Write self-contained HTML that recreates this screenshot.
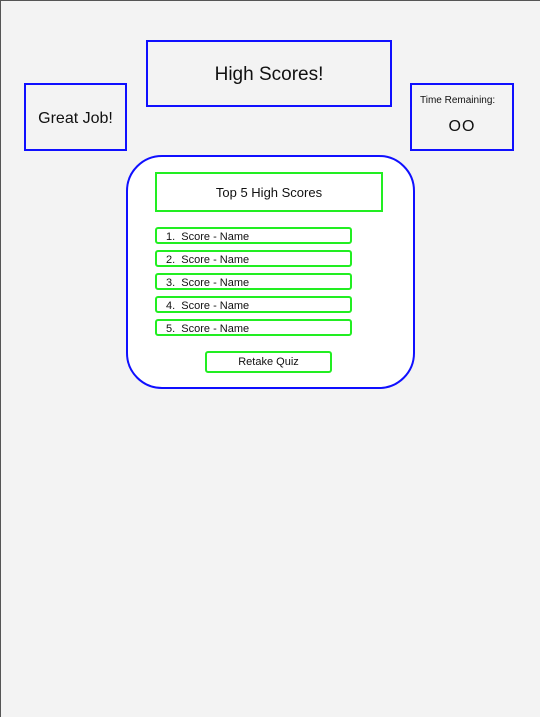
<!DOCTYPE html>
<html><head><style>
body{margin:0;width:540px;height:716px;background:#f3f3f3;font-family:"Liberation Sans",sans-serif;color:#111;position:relative;overflow:hidden}
.frame{position:absolute;left:0;top:0;width:540px;height:716px;border-left:1px solid #555;border-top:1px solid #555}
.b{position:absolute;box-sizing:border-box;border:2px solid #0f0fff;display:flex;align-items:center;justify-content:center}
.g{position:absolute;box-sizing:border-box;border:2px solid #22ee22;display:flex;align-items:center}
.g.l{padding-top:2px}
</style></head><body>
<div class="frame"></div>
<div class="b" style="left:146px;top:40px;width:246px;height:67px;font-size:19px;padding-top:2px">High Scores!</div>
<div class="b" style="left:24px;top:83px;width:103px;height:68px;font-size:16px;padding-top:3px">Great Job!</div>
<div class="b" style="left:410px;top:83px;width:104px;height:68px;display:block">
<div style="font-size:10px;margin:10px 0 0 8px">Time Remaining:</div>
<div style="font-size:16px;text-align:center;margin-top:12px;letter-spacing:1px">OO</div></div>
<div class="b" style="left:126px;top:155px;width:289px;height:234px;border-radius:36px;background:#fff"></div>
<div class="g" style="left:155px;top:172px;width:228px;height:40px;justify-content:center;font-size:13px">Top 5 High Scores</div>
<div class="g l" style="left:155px;top:227px;width:197px;height:17px;border-radius:3px;font-size:11px;padding-left:9px">1.&nbsp; Score - Name</div>
<div class="g l" style="left:155px;top:250px;width:197px;height:17px;border-radius:3px;font-size:11px;padding-left:9px">2.&nbsp; Score - Name</div>
<div class="g l" style="left:155px;top:273px;width:197px;height:17px;border-radius:3px;font-size:11px;padding-left:9px">3.&nbsp; Score - Name</div>
<div class="g l" style="left:155px;top:296px;width:197px;height:17px;border-radius:3px;font-size:11px;padding-left:9px">4.&nbsp; Score - Name</div>
<div class="g l" style="left:155px;top:319px;width:197px;height:17px;border-radius:3px;font-size:11px;padding-left:9px">5.&nbsp; Score - Name</div>
<div class="g" style="left:205px;top:351px;width:127px;height:22px;border-radius:3px;justify-content:center;font-size:11px">Retake Quiz</div>
</body></html>
